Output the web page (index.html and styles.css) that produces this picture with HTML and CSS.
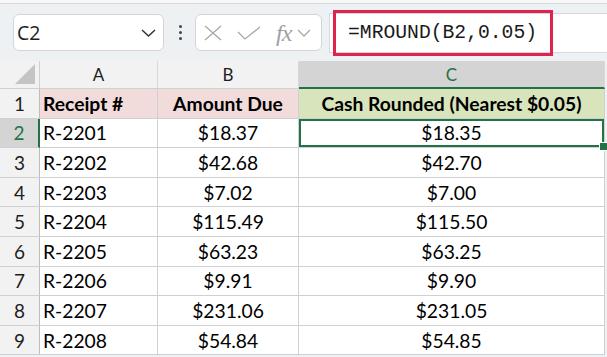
FILE: index.html
```html
<!DOCTYPE html>
<html lang="en">
<head>
    <meta charset="UTF-8">
    <title>MROUND</title>
    <link rel="stylesheet" href="styles.css">
</head>
<body>
    <div class="top-band"></div>
    <div class="toolbar">
        <div class="name-box">
            <span>C2</span>
            <svg width="15" height="8" viewBox="0 0 15 8"><path d="M1 1 L7.5 7 L14 1" fill="none" stroke="#333" stroke-width="1.5"/></svg>
        </div>
        <div class="dots"><i></i><i></i><i></i></div>
        <div class="fx-box">
            <svg width="18" height="16" viewBox="0 0 18 16"><path d="M1 1 L17 15 M17 1 L1 15" stroke="#a8a8a8" stroke-width="1.3"/></svg>
            <svg width="24" height="14" viewBox="0 0 24 14"><path d="M1 6 L8 13 L23 1" fill="none" stroke="#a8a8a8" stroke-width="1.3"/></svg>
            <span class="fx">fx</span>
            <svg width="14" height="8" viewBox="0 0 14 8"><path d="M1 1 L7 7 L13 1" fill="none" stroke="#a8a8a8" stroke-width="1.3"/></svg>
        </div>
        <div class="formula-bar">
            <span class="formula">=MROUND(B2,0.05)</span>
        </div>
    </div>

    <div class="sheet">
        <div class="corner"><span class="tri"></span></div>
        <div class="col-head">A</div>
        <div class="col-head">B</div>
        <div class="col-head active">C</div>

        <div class="row-head">1</div>
        <div class="cell title pink">Receipt #</div>
        <div class="cell title pink center">Amount Due</div>
        <div class="cell title green center">Cash Rounded (Nearest $0.05)</div>

        <div class="row-head active">2</div>
        <div class="cell">R-2201</div>
        <div class="cell center">$18.37</div>
        <div class="cell center selected">$18.35<span class="handle"></span></div>

        <div class="row-head">3</div>
        <div class="cell">R-2202</div>
        <div class="cell center">$42.68</div>
        <div class="cell center">$42.70</div>

        <div class="row-head">4</div>
        <div class="cell">R-2203</div>
        <div class="cell center">$7.02</div>
        <div class="cell center">$7.00</div>

        <div class="row-head">5</div>
        <div class="cell">R-2204</div>
        <div class="cell center">$115.49</div>
        <div class="cell center">$115.50</div>

        <div class="row-head">6</div>
        <div class="cell">R-2205</div>
        <div class="cell center">$63.23</div>
        <div class="cell center">$63.25</div>

        <div class="row-head">7</div>
        <div class="cell">R-2206</div>
        <div class="cell center">$9.91</div>
        <div class="cell center">$9.90</div>

        <div class="row-head">8</div>
        <div class="cell">R-2207</div>
        <div class="cell center">$231.06</div>
        <div class="cell center">$231.05</div>

        <div class="row-head">9</div>
        <div class="cell">R-2208</div>
        <div class="cell center">$54.84</div>
        <div class="cell center">$54.85</div>
    </div>
</body>
</html>
```

FILE: styles.css
```css
body{
    margin: 0;
    padding: 0;
    background-color: #eef1f4;
    overflow: hidden;
    font-family: "Lato", "Open Sans", sans-serif;
}

.top-band{
    height: 3px;
    background-color: #f7f7f7;
    border-bottom: 1px solid #d6d8db;
}

.toolbar{
    display: flex;
    align-items: center;
    height: 57px;
    padding-left: 13px;
}

.name-box{
    display: flex;
    align-items: center;
    justify-content: space-between;
    box-sizing: border-box;
    width: 151px;
    height: 37px;
    padding: 0 7px 0 3px;
    background-color: #ffffff;
    border: 1px solid #d3d5d8;
    border-radius: 6px;
    font-family: "Open Sans", sans-serif;
    font-size: 19.5px;
    color: #1e1e1e;
}

.dots{
    display: flex;
    flex-direction: column;
    gap: 3px;
    margin: 0 13px 0 15px;
}

.dots i{
    display: block;
    width: 3px;
    height: 3px;
    border-radius: 50%;
    background-color: #444;
}

.fx-box{
    display: flex;
    align-items: center;
    box-sizing: border-box;
    width: 127px;
    height: 37px;
    padding-left: 8px;
    background-color: #ffffff;
    border: 1px solid #d3d5d8;
    border-radius: 6px;
}

.fx-box svg:nth-child(2){
    margin-left: 15px;
}

.fx{
    margin-left: 15px;
    font-family: "Liberation Serif", serif;
    font-style: italic;
    font-size: 24px;
    letter-spacing: -1px;
    color: #a0a0a0;
    margin-right: 6px;
    line-height: 1;
}

.formula-bar{
    flex: 1;
    display: flex;
    align-items: center;
    height: 38px;
    margin-left: 7px;
    background-color: #ffffff;
    border-top: 1px solid #d6d8db;
    border-bottom: 1px solid #d6d8db;
    border-left: 1px solid #d6d8db;
}

.formula{
    display: flex;
    align-items: center;
    box-sizing: border-box;
    width: 220px;
    height: 46px;
    margin-left: 3px;
    padding-left: 12px;
    border: 3px solid #e0234e;
    font-family: "Liberation Mono", monospace;
    font-size: 19.7px;
    color: #1a1a1a;
}

.sheet{
    display: grid;
    grid-template-columns: 40px 118px 141px 306px;
    grid-template-rows: 28px repeat(9, 29.6px);
    background-color: #ffffff;
    width: 605px;
}

.sheet > div{
    box-sizing: border-box;
    border-right: 1px solid #d0d0d0;
    border-bottom: 1px solid #d0d0d0;
    display: flex;
    align-items: center;
    font-size: 19.3px;
    color: #000;
    white-space: nowrap;
}

.corner{
    position: relative;
    background-color: #f2f2f2;
}

.tri{
    position: absolute;
    right: 4px;
    bottom: 4px;
    width: 0;
    height: 0;
    border-left: 20px solid transparent;
    border-bottom: 20px solid #c4c4c4;
}

.sheet .col-head{
    justify-content: center;
    background-color: #f2f2f2;
    font-size: 17px;
    color: #1e1e1e;
    border-right-color: #d8d8d8;
}

.sheet .col-head.active{
    background-color: #d4d4d4;
    color: #217346;
    border-bottom: 2px solid #217346;
}

.sheet .row-head{
    justify-content: center;
    background-color: #f2f2f2;
    font-size: 19px;
    color: #1e1e1e;
    border-right-color: #bdbdbd;
}

.sheet .row-head.active{
    background-color: #d4d4d4;
    color: #217346;
    border-right: 2px solid #217346;
}

.sheet .cell{
    padding-left: 3px;
}

.sheet .center{
    justify-content: center;
    padding-left: 0;
}

.sheet .title{
    font-weight: bold;
}

.sheet .pink{
    background-color: #f2dcdb;
}

.sheet .green{
    background-color: #d8e4bc;
}

.sheet .selected{
    position: relative;
    box-shadow: inset 0 0 0 2px #217346;
}

.handle{
    position: absolute;
    right: -4px;
    bottom: -4px;
    width: 7px;
    height: 7px;
    background-color: #217346;
    border: 1px solid #ffffff;
    z-index: 2;
}
```
